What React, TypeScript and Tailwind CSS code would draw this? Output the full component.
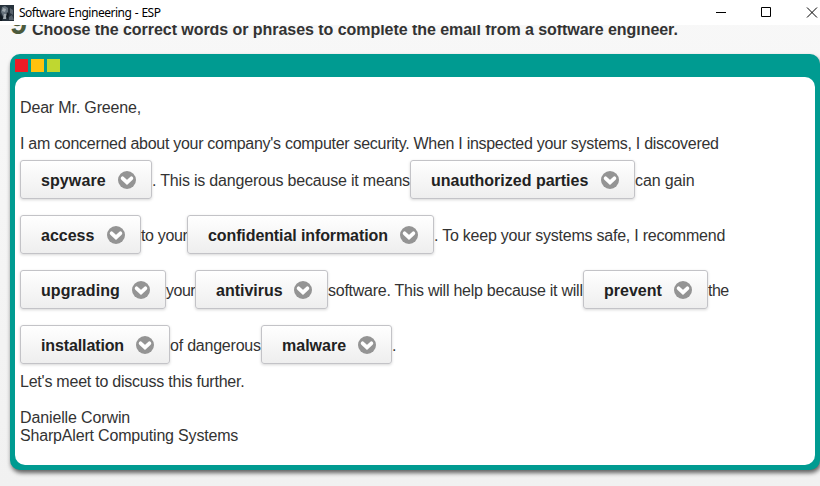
import type { ReactNode } from 'react';

function Choice({ label, width }: { label: string; width: string }) {
  return (
    <button
      className={`flex h-[39px] shrink-0 items-center justify-between rounded-[3px] border border-[#c3c3c7] bg-linear-to-b from-white to-[#eeeeee] pr-[15px] pl-5 font-bold text-[#222222] shadow-[0_1px_3px_rgba(0,0,0,0.16)] ${width}`}
    >
      <span className="pt-[2px]">{label}</span>
      <svg className="size-[18px] shrink-0" viewBox="0 0 18 18" fill="none">
        <circle cx="9" cy="9" r="9" fill="#949494" />
        <path d="M4.6 7.3L9 11.4L13.4 7.3" stroke="white" strokeWidth="3.7" strokeLinecap="round" />
      </svg>
    </button>
  );
}

function Row({ children }: { children: ReactNode }) {
  return <div className="flex h-[55px] items-start leading-[41px]">{children}</div>;
}

export default function App() {
  return (
    <div className="flex h-[486px] w-[820px] flex-col overflow-hidden bg-linear-to-b from-[#f8f8f8] to-[#f1f1f1] font-['Liberation_Sans',Arial,sans-serif] text-base whitespace-nowrap text-[#333333]">
      <header className="flex h-[25px] shrink-0 items-center bg-white text-black">
        <svg className="h-4 w-[14px] shrink-0" viewBox="0 0 14 16">
          <path d="M0 0H14V16H0Z" fill="#27323c" />
          <path d="M2 2L5 1L8 3V8L6 12L3 11L1 7Z" fill="#65717b" />
          <path d="M3 3L6 4L5 7L2 6ZM4 9H7L6 14H3Z" fill="#a0a9af" />
          <path d="M10 3L13 5V10L10 8ZM9 12L12 10L14 15H9Z" fill="#58636d" />
          <path d="M0 9L3 12L2 16H0ZM7 7L9 9L8 14L6 12Z" fill="#121a21" />
        </svg>
        <h1 className="ml-[5px] w-[142px] font-['Noto_Sans',sans-serif] text-[12px] leading-4 tracking-[-0.49px] [word-spacing:0.7px]">Software Engineering - ESP</h1>
        <svg className="ml-auto h-[11px] w-[104px] shrink-0" viewBox="0 0 104 11" fill="none" stroke="black">
          <path d="M0 5.5H10" />
          <path d="M45.5 .5H54.5V9.5H45.5Z" />
          <path d="M91 .5L101 10.5M101 .5L91 10.5" />
        </svg>
      </header>

      <div className="flex h-[29px] shrink-0 items-start overflow-hidden pl-[10px] font-bold">
        <span className="-mt-[15px] w-[22px] text-[31px] leading-7 text-[#4b5a3c]">9</span>
        <h2 className="-mt-1 leading-[18px] tracking-[-0.05px]">Choose the correct words or phrases to complete the email from a software engineer.</h2>
      </div>

      <main className="ml-[10px] flex h-[416px] w-[810px] shrink-0 flex-col rounded-[10px] bg-[#009b91] px-[5px] pb-[5px] shadow-[1px_3px_4px_rgba(0,0,0,0.6)]">
        <div className="flex h-[23px] shrink-0 gap-[3px] pt-[5px]">
          <span className="size-[13px] bg-[#ee1c25]" />
          <span className="size-[13px] bg-[#ffc20e]" />
          <span className="size-[13px] bg-[#bfd730]" />
        </div>
        <section className="grow rounded-[10px] bg-white px-[5px] pt-[22px] leading-[18px]">
          <p className="tracking-[-0.16px]">Dear Mr. Greene,</p>
          <p className="mt-[18px] mb-[7px] tracking-[-0.285px]">I am concerned about your company's computer security. When I inspected your systems, I discovered</p>
          <Row>
            <Choice label="spyware" width="w-[132px] tracking-[0.1px]" />
            <span className="w-[258px] tracking-[-0.19px]">. This is dangerous because it means</span>
            <Choice label="unauthorized parties" width="w-[225px]" />
            <span className="tracking-[-0.12px]">can gain</span>
          </Row>
          <Row>
            <Choice label="access" width="w-[121px]" />
            <span className="w-[46px] tracking-[-0.34px]">to your</span>
            <Choice label="confidential information" width="w-[247px] tracking-[-0.1px]" />
            <span className="tracking-[-0.23px]">. To keep your systems safe, I recommend</span>
          </Row>
          <Row>
            <Choice label="upgrading" width="w-[146px] tracking-[0.08px]" />
            <span className="w-[29px] tracking-[-0.5px]">your</span>
            <Choice label="antivirus" width="w-[133px]" />
            <span className="w-[255px] tracking-[-0.25px]">software. This will help because it will</span>
            <Choice label="prevent" width="w-[125px]" />
            <span className="tracking-[-0.5px]">the</span>
          </Row>
          <Row>
            <Choice label="installation" width="w-[150px] tracking-[-0.12px]" />
            <span className="w-[91px] tracking-[-0.22px]">of dangerous</span>
            <Choice label="malware" width="w-[131px]" />
            <span>.</span>
          </Row>
          <p className="-mt-[7px] tracking-[-0.23px]">Let's meet to discuss this further.</p>
          <p className="mt-[18px] tracking-[-0.13px]">Danielle Corwin</p>
          <p className="tracking-[-0.18px]">SharpAlert Computing Systems</p>
        </section>
      </main>
    </div>
  );
}
